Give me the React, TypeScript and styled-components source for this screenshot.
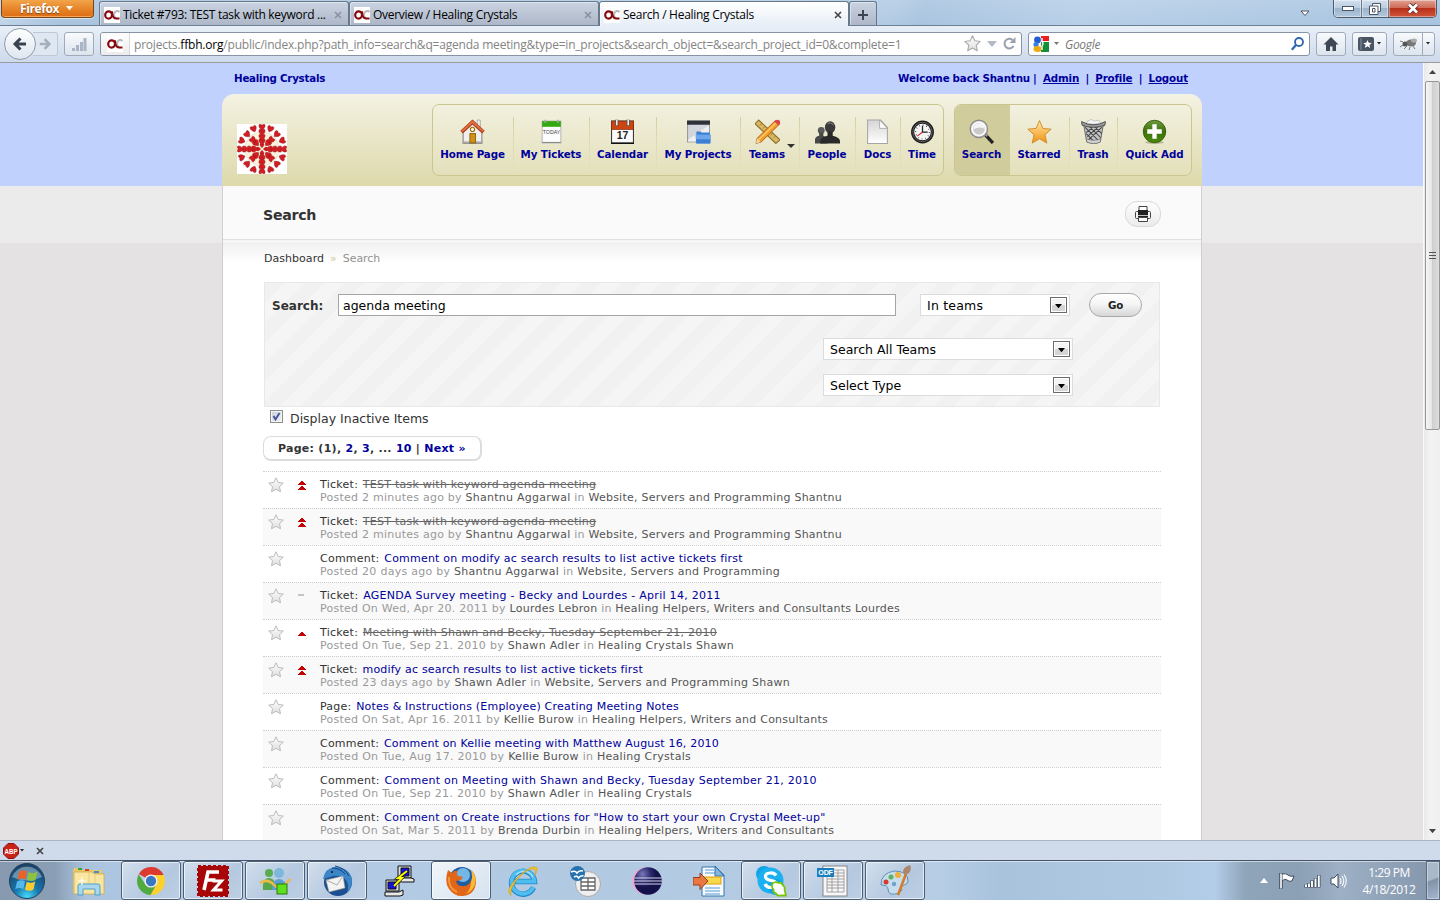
import React from "react";
import styled, { createGlobalStyle, css } from "styled-components";

const Global = createGlobalStyle`
  * { box-sizing: border-box; }
  html, body { margin: 0; padding: 0; }
  body { width: 1440px; height: 900px; overflow: hidden; font-family: "DejaVu Sans", sans-serif; color: #333; }
  svg { display: block; flex: none; }
`;

const Desktop = styled.div`
  width: 1440px;
  height: 900px;
  display: flex;
  flex-direction: column;
  overflow: hidden;
  background: #cfdaeb;
`;

const uiFont = css`
  font-family: "Open Sans", "Noto Sans", sans-serif;
  font-size: 12px;
  letter-spacing: -0.28px;
  color: #000;
`;

/* ---------- browser window ---------- */

const TitleBar = styled.div`
  ${uiFont};
  height: 26px;
  flex: none;
  display: flex;
  align-items: flex-start;
  padding-left: 1px;
  border-bottom: 1px solid #6d7f93;
  background: linear-gradient(180deg, rgba(255, 255, 255, 0.12), rgba(255, 255, 255, 0)),
    linear-gradient(115deg, #c3d7ea 0, #a9c4de 5%, #b5cde5 45%, #b2cbe4 62%, #a9c4e0 64%, #b7cfe8 75%, #a7c3df 100%);
`;

const FirefoxButton = styled.div`
  width: 93px;
  height: 18px;
  border: 1px solid #7d4417;
  border-top: 0;
  border-radius: 0 0 4px 4px;
  background: linear-gradient(#f2a54a, #e8862a 50%, #dd6c14);
  box-shadow: inset 0 -1px 0 #f3a85b, 0 1px 0 rgba(255, 255, 255, 0.5);
  color: #fff;
  font-weight: bold;
  letter-spacing: -0.4px;
  line-height: 16px;
  text-shadow: 0 1px 1px #7d4417;
  display: flex;
  align-items: center;
  gap: 7px;
  padding-left: 18px;
`;

const Tabs = styled.div`
  display: flex;
  margin: 1px 0 0 5px;
  height: 25px;
`;

const Tab = styled.div<{ $active?: boolean; $w: number }>`
  width: ${(p) => p.$w}px;
  height: ${(p) => (p.$active ? 25 : 24)}px;
  display: flex;
  align-items: center;
  border: 1px solid #66788c;
  border-bottom: 0;
  border-radius: 3px 3px 0 0;
  background: ${(p) => (p.$active ? "linear-gradient(#ffffff, #e7eef7)" : "linear-gradient(#c9d3e1, #adb7c8)")};
  box-shadow: inset 1px 1px 0 rgba(255, 255, 255, 0.45);
  padding: 2px 6px 0 4px;
`;

const TabLabel = styled.span`
  flex: 1;
  margin-left: 3px;
  white-space: nowrap;
  line-height: 18px;
`;

const WindowButtons = styled.div`
  display: flex;
  width: 104px;
  height: 18px;
  margin-right: 3px;
  border: 1px solid #4c5a6b;
  border-top: 0;
  border-radius: 0 0 5px 5px;
  overflow: hidden;
`;

const WindowButton = styled.div<{ $w: number; $close?: boolean }>`
  width: ${(p) => p.$w}px;
  display: flex;
  align-items: center;
  justify-content: center;
  border-right: ${(p) => (p.$close ? 0 : 1)}px solid #6b7b8e;
  box-shadow: inset 0 0 0 1px rgba(255, 255, 255, 0.4);
  background: ${(p) =>
    p.$close
      ? "linear-gradient(#e0a493, #cf6a55 45%, #b8301a 50%, #d1553a)"
      : "linear-gradient(#d3e0ee, #bccee1 45%, #9db4cd 50%, #b3c8de)"};
`;

const Spacer = styled.div`
  flex: 1;
`;

const TabListArrow = styled.div`
  margin: 10px 23px 0 0;
`;

const Toolbar = styled.div`
  ${uiFont};
  height: 37px;
  flex: none;
  display: flex;
  align-items: center;
  padding: 1px 5px 2px 4px;
  background: linear-gradient(#e8eff8, #cedaeb);
  border-bottom: 1px solid #9a9b9c;
`;

const BackButton = styled.div`
  width: 32px;
  height: 32px;
  border-radius: 50%;
  border: 1px solid #8f9bab;
  background: linear-gradient(#fdfeff, #dfe6ef);
  display: flex;
  align-items: center;
  justify-content: center;
  margin-right: -3px;
  z-index: 1;
`;

const ForwardButton = styled.div`
  width: 25px;
  height: 24px;
  border: 1px solid #bcc8d8;
  border-left: 0;
  border-radius: 0 3px 3px 0;
  display: flex;
  align-items: center;
  padding-left: 5px;
  background: #dfe7f2;
`;

const ToolButton = styled.div<{ $w: number; $ml: number }>`
  width: ${(p) => p.$w}px;
  height: 24px;
  margin-left: ${(p) => p.$ml}px;
  border: 1px solid #9faaba;
  border-radius: 3px;
  background: linear-gradient(#f8fafc, #dce4ee);
  display: flex;
  align-items: center;
  justify-content: center;
  gap: 3px;
`;

const Field = styled.div<{ $w: number; $ml: number }>`
  width: ${(p) => p.$w}px;
  height: 24px;
  margin-left: ${(p) => p.$ml}px;
  border: 1px solid #8894a5;
  border-radius: 3px;
  background: #fff;
  display: flex;
  align-items: center;
  overflow: hidden;
`;

const Identity = styled.div`
  width: 29px;
  height: 22px;
  display: flex;
  align-items: center;
  justify-content: center;
  border-right: 1px solid #d5d8dc;
  background: linear-gradient(#fdfdfd, #ececec);
`;

const Url = styled.span`
  margin-left: 4px;
  padding-top: 1px;
  letter-spacing: -0.2px;
  white-space: nowrap;
  color: #848484;
  b {
    font-weight: normal;
    color: #000;
  }
`;

const FieldIcons = styled.div`
  display: flex;
  align-items: center;
  gap: 6px;
  margin-left: auto;
  padding-right: 5px;
`;

const SearchHint = styled.span`
  margin-left: 6px;
  padding-top: 1px;
  flex: 1;
  font-style: italic;
  color: #777;
`;

const EngineArrow = styled.div`
  margin-left: 4px;
`;

const SplitLine = styled.div`
  width: 1px;
  height: 22px;
  background: #9faaba;
`;

/* ---------- page ---------- */

const Viewport = styled.div`
  height: 777px;
  flex: none;
  display: flex;
  overflow: hidden;
`;

const Page = styled.div`
  width: 1423px;
  display: flex;
  justify-content: center;
  background: linear-gradient(#c0d1fe 0, #c0d1fe 123px, #ebebeb 123px, #ebebeb 180px, #e5e2e3 180px);
`;

const Site = styled.div`
  width: 980px;
  margin-left: 1px;
`;

const AccountBar = styled.div`
  height: 31px;
  display: flex;
  justify-content: space-between;
  padding: 8px 14px 0 12px;
  font-size: 10.3px;
  line-height: 15px;
  font-weight: bold;
  color: #00009c;
  letter-spacing: -0.24px;
`;

const AccountLinks = styled.div`
  white-space: pre;
  letter-spacing: -0.14px;
  word-spacing: -0.35px;
  u {
    text-underline-offset: 1px;
  }
`;

const Header = styled.div`
  height: 92px;
  border-radius: 12px 12px 0 0;
  background: linear-gradient(#f4f2e3, #ddd9ab);
  display: flex;
  padding: 10px 10px 0 15px;
`;

const Crest = styled.div`
  width: 50px;
  height: 50px;
  margin-top: 20px;
  background: #fff;
`;

const NavGroup = styled.div<{ $ml: number }>`
  display: flex;
  height: 72px;
  margin-left: ${(p) => p.$ml}px;
  border: 1px solid #cbc690;
  border-radius: 7px;
  background: linear-gradient(rgba(255, 255, 255, 0.08), rgba(255, 255, 255, 0.12));
`;

const NavItem = styled.div<{ $w: number; $selected?: boolean; $plain?: boolean; $menu?: boolean }>`
  width: ${(p) => p.$w}px;
  display: flex;
  flex-direction: column;
  align-items: center;
  padding: 14px ${(p) => (p.$menu ? 7 : p.$plain ? 0 : 2)}px 0 0;
  font-size: 10.3px;
  font-weight: bold;
  letter-spacing: -0.1px;
  line-height: 14px;
  white-space: nowrap;
  color: #00009c;
  position: relative;
  border-radius: ${(p) => (p.$selected ? "6px 0 0 6px" : "0")};
  background: ${(p) =>
    p.$selected
      ? "#d1cc9b"
      : p.$plain
        ? "none"
        : "linear-gradient(#d4cfa2, rgba(212, 207, 162, 0.1)) no-repeat right 12px / 1px 52px"};
  svg {
    margin-bottom: 3px;
  }
`;

const MenuArrow = styled.span`
  position: absolute;
  right: 5px;
  top: 39px;
  border: 4px solid transparent;
  border-top-color: #333;
  border-bottom: 0;
`;

const TitleStrip = styled.div`
  height: 56px;
  border: solid #d0d0d0;
  border-width: 0 1px;
  background: linear-gradient(#fafafa 53px, #dfdfdf 53px, #dfdfdf 54px, #f2f2f2 54px, #fdfdfd);
  display: flex;
  justify-content: space-between;
  padding: 15px 40px 0 40px;
`;

const PageTitle = styled.h1`
  margin: 0;
  font-size: 14.2px;
  line-height: 28px;
  letter-spacing: -0.3px;
  color: #333;
`;

const PrintButton = styled.div`
  width: 36px;
  height: 26px;
  border: 1px solid #d9d9d9;
  border-radius: 12px;
  background: linear-gradient(#fefefe, #ebebeb);
  display: flex;
  align-items: center;
  justify-content: center;
`;

const Content = styled.div`
  height: 598px;
  border: solid #d0d0d0;
  border-width: 0 1px;
  background: linear-gradient(#f1f1f1 1px, #ffffff 21px);
  padding: 9px 40px 0;
`;

const Breadcrumb = styled.div`
  padding-left: 1px;
  font-size: 11px;
  line-height: 16px;
  display: flex;
  gap: 6px;
  color: #929292;
  letter-spacing: -0.05px;
  span:first-child {
    color: #333;
    letter-spacing: 0.04px;
  }
`;

const Chevron = styled.span`
  color: #c9b98a;
  opacity: 0.8;
`;

const SearchPanel = styled.div`
  width: 896px;
  height: 125px;
  margin: 15px 0 0 1px;
  border: 1px solid #e8e8e8;
  background: repeating-linear-gradient(135deg, #f1f1f1 0 14px, #f5f5f5 14px 28px);
  font-size: 12.5px;
`;

const SearchRow = styled.div`
  display: flex;
  align-items: center;
  height: 24px;
  margin-top: 10px;
`;

const FieldLabel = styled.label`
  width: 66px;
  font-weight: bold;
  font-size: 12px;
  margin-left: 7px;
  padding-top: 1px;
`;

const TextInput = styled.div`
  width: 558px;
  height: 22px;
  border: 1px solid #a5a5a5;
  background: #fff;
  color: #000;
  line-height: 22px;
  padding-left: 4px;
`;

const Select = styled.div<{ $w: number; $ls?: number }>`
  width: ${(p) => p.$w}px;
  height: 22px;
  border: 1px solid #dcdcdc;
  background: #fff;
  color: #000;
  letter-spacing: ${(p) => p.$ls ?? 0}px;
  display: flex;
  align-items: center;
  justify-content: space-between;
  padding: 0 2px 0 6px;
`;

const DropButton = styled.div`
  width: 17px;
  height: 16px;
  border: 1px solid #6b6b6b;
  background: linear-gradient(#f4f4f4 0 50%, #d5d5d5 50%);
  box-shadow: inset 0 0 0 1px #fff;
  display: flex;
  align-items: center;
  justify-content: center;
  padding-top: 3px;
`;

const SelectSlot = styled.div<{ $ml: number; $mt?: number }>`
  display: flex;
  margin-left: ${(p) => p.$ml}px;
  margin-top: ${(p) => p.$mt ?? 0}px;
`;

const GoButton = styled.div`
  width: 53px;
  height: 24px;
  margin-left: 19px;
  border: 1px solid #a9a9a9;
  border-radius: 12px;
  background: linear-gradient(#ffffff, #f5f5f5 45%, #d7d7d7);
  font-size: 10.3px;
  letter-spacing: -0.2px;
  font-weight: bold;
  color: #222;
  line-height: 23px;
  text-align: center;
`;

const InactiveRow = styled.div`
  height: 24px;
  padding: 0 0 2px 7px;
  display: flex;
  align-items: center;
  gap: 7px;
  font-size: 12.5px;
`;

const Checkbox = styled.div`
  width: 13px;
  height: 13px;
  margin-top: -3px;
  border: 1px solid #8e8f8f;
  box-shadow: inset 0 0 0 1px #f4f4f4;
  background: linear-gradient(135deg, #c8ced6, #f3f5f7);
`;

const Pager = styled.div`
  width: 219px;
  height: 25px;
  margin: 5px 0 10px;
  border: 1px solid #dcdcdc;
  border-right-width: 2px;
  border-bottom-width: 2px;
  border-radius: 8px;
  padding-left: 14px;
  font-size: 11px;
  font-weight: bold;
  letter-spacing: 0.27px;
  line-height: 23px;
  white-space: nowrap;
  background: #fff;
  a {
    color: #00009c;
  }
`;

const Results = styled.div`
  width: 898px;
`;

const ResultRow = styled.div<{ $alt: boolean }>`
  height: 37px;
  border-top: 1px dotted #cfcfcf;
  background: ${(p) => (p.$alt ? "#f9f9f9" : "#fff")};
  display: flex;
  padding: 5px 0 0 5px;
`;

const Priority = styled.div`
  width: 36px;
  padding: 3px 0 0 13px;
`;

const ResultText = styled.div`
  font-size: 11px;
  line-height: 13px;
  padding-top: 1px;
  white-space: nowrap;
`;

const ResultTitle = styled.div<{ $ls: number; $done?: boolean }>`
  letter-spacing: ${(p) => p.$ls}px;
  a {
    margin-left: 1px;
    letter-spacing: ${(p) => p.$ls - 0.02}px;
    color: ${(p) => (p.$done ? "#666" : "#00009c")};
    text-decoration: ${(p) => (p.$done ? "line-through" : "none")};
  }
`;

const ResultMeta = styled.div<{ $ls: number }>`
  letter-spacing: ${(p) => p.$ls}px;
  color: #999;
  b {
    font-weight: normal;
    color: #555;
  }
`;

const ScrollTrack = styled.div`
  width: 17px;
  border-left: 1px solid #fafafa;
  background: linear-gradient(90deg, #e9e9e9, #f3f3f3 40%, #f0f0f0);
  display: flex;
  flex-direction: column;
  align-items: center;
`;

const ScrollArrow = styled.div`
  height: 18px;
  display: flex;
  align-items: center;
`;

const ScrollThumb = styled.div`
  width: 15px;
  height: 349px;
  border: 1px solid #979797;
  border-radius: 2px;
  background: linear-gradient(90deg, #f6f6f6, #e6e6e6 45%, #cfcfcf 50%, #dedede);
  display: flex;
  align-items: center;
  justify-content: center;
`;

const AddonBar = styled.div`
  height: 20px;
  flex: none;
  border-top: 1px solid #a9b4c4;
  background: #cfdaeb;
  display: flex;
  align-items: center;
  padding-left: 3px;
  gap: 1px;
`;

const AddonClose = styled.div`
  margin-left: 11px;
`;

/* ---------- taskbar ---------- */

const Taskbar = styled.div`
  ${uiFont};
  height: 40px;
  flex: none;
  border-top: 1px solid #43546a;
  box-shadow: inset 0 1px 0 rgba(255, 255, 255, 0.55);
  display: flex;
  align-items: stretch;
  background: linear-gradient(
    90deg,
    #8699af 0,
    #8a9fb5 55px,
    #aac3de 85px,
    #b3cbe5 200px,
    #b2c9e2 600px,
    #b7cde6 940px,
    #a9c3dc 1000px,
    #b0c9e2 1150px,
    #b3cce8 1215px,
    #8fa5ba 1245px,
    #8b9fb5 1300px,
    #9db0c5 1340px,
    #8598ae 1426px
  );
`;

const StartSlot = styled.div`
  width: 58px;
  display: flex;
  align-items: center;
  padding-left: 8px;
`;

const TaskSlot = styled.div<{ $open?: boolean; $active?: boolean }>`
  width: 60px;
  margin: 0 1px;
  height: 39px;
  border-radius: 3px;
  display: flex;
  align-items: center;
  justify-content: center;
  ${(p) =>
    p.$open &&
    css`
      border: 1px solid #4d5d72;
      box-shadow: inset 0 0 0 1px rgba(255, 255, 255, 0.65);
      background: ${p.$active
        ? "linear-gradient(135deg, #f0f5fa, #d5e2ef)"
        : "linear-gradient(135deg, #d2dfed, #b4c8df 60%, #bccfe4)"};
    `}
`;

const Tray = styled.div`
  display: flex;
  align-items: center;
  gap: 9px;
  margin-left: auto;
`;

const Clock = styled.div`
  width: 54px;
  margin: 0 10px 0 6px;
  color: #fff;
  line-height: 17px;
  text-align: center;
  letter-spacing: -0.45px;
`;

const ShowDesktop = styled.div`
  width: 14px;
  border: 1px solid #5c6c80;
  box-shadow: inset 0 0 0 1px rgba(255, 255, 255, 0.35);
  background: linear-gradient(160deg, #a9b9ca 45%, #7f92a8 50%, #a5b8cf);
`;

/* ---------- small drawings ---------- */

const OcIcon = () => (
  <svg width="16" height="16" viewBox="0 0 16 16" fill="none">
    <rect width="16" height="16" fill="#fff" />
    <path d="M15.500 5A3.200 3.800 0 1 0 13 11.500" stroke="#b9b9b9" strokeWidth="2" />
    <ellipse cx="4.600" cy="8" rx="3.400" ry="3.700" stroke="#86090d" strokeWidth="2.200" />
    <path d="M8 4.300q.2 7.200 4 7.200h3.500" stroke="#86090d" strokeWidth="2" />
  </svg>
);

const Cross = ({ c = "#444", s = 8 }: { c?: string; s?: number }) => (
  <svg width={s} height={s} viewBox="0 0 8 8">
    <path d="M1 1l6 6M7 1l-6 6" stroke={c} strokeWidth="1.6" />
  </svg>
);

const Down = ({ w = 5, c = "#222" }: { w?: number; c?: string }) => (
  <svg width={w} height={w * 0.6} viewBox="0 0 10 6">
    <path d="M0 0h10L5 6z" fill={c} />
  </svg>
);

const Arrow = ({ c, flip, s = 16 }: { c: string; flip?: boolean; s?: number }) => (
  <svg width={s} height={s} viewBox="0 0 16 16" fill="none">
    <path d={flip ? "M2 8h10M7.5 2.5L13 8l-5.5 5.5" : "M14 8H4M8.500 2.500L3 8l5.500 5.500"} stroke={c} strokeWidth="3" />
  </svg>
);

const Star = ({ s = 16, stroke = "#bcbcbc" }: { s?: number; stroke?: string }) => (
  <svg width={s} height={s} viewBox="0 0 16 16">
    <defs>
      <linearGradient id="silver" x2="0" y2="1">
        <stop stopColor="#fff" />
        <stop offset="1" stopColor="#dedede" />
      </linearGradient>
    </defs>
    <path
      d="M8 .8l2.200 4.700 5.100.6-3.800 3.500 1 5.200L8 12.300l-4.500 2.500 1-5.200L.7 6.100l5.100-.6z"
      fill="url(#silver)"
      stroke={stroke}
      strokeLinejoin="round"
    />
  </svg>
);

const PriorityMark = ({ level }: { level?: string }) => {
  if (level === "highest")
    return (
      <svg width="10" height="12" viewBox="0 0 10 12" shapeRendering="crispEdges">
        <path d="M4 1h2v1h1v1h1v1h1v1H1V4h1V3h1V2h1zM4 6h2v1h1v1h1v1h1v1H1V9h1V8h1V7h1z" fill="#c40000" />
      </svg>
    );
  if (level === "high")
    return (
      <svg width="10" height="12" viewBox="0 0 10 12" shapeRendering="crispEdges">
        <path d="M4 4h2v1h1v1h1v1h1v1H1V7h1V6h1V5h1z" fill="#c40000" />
      </svg>
    );
  if (level === "normal")
    return (
      <svg width="10" height="12" viewBox="0 0 10 12">
        <path d="M1 3h6v2H1z" fill="#c4c4c4" />
      </svg>
    );
  return null;
};

const heart = "M0 3C-4.500-.5-2.500-4 0-1.500 2.500-4 4.500-.5 0 3z";
const CrestArt = () => (
  <svg width="50" height="50" viewBox="-25 -25 50 50">
    <circle r="17" fill="#fbf3dc" stroke="#dccfb0" strokeWidth=".5" />
    {Array.from({ length: 16 }, (_, i) => {
      const radii = i % 4 === 0 ? [3.5, 7.5, 12, 17, 22] : i % 2 === 0 ? [8.5, 13, 21] : [22];
      return radii.map((r) => (
        <path
          key={`${i}-${r}`}
          d={heart}
          transform={`rotate(${i * 22.5}) translate(0 ${-r}) scale(${r < 5 ? 0.75 : 1.15})`}
          fill="#d41d22"
          stroke="#8c1114"
          strokeWidth=".4"
        />
      ));
    })}
  </svg>
);

const NavIcon = ({ name }: { name: string }) => {
  const art: Record<string, React.ReactNode> = {
    home: (
      <>
        <path d="M16.500 1h3v7h-3z" fill="#eee" stroke="#999" strokeWidth=".7" />
        <path d="M3 11l9-8 9 8v12.500H3z" fill="#f2f0ef" stroke="#666" strokeWidth=".8" />
        <path d="M2 21.500h20v2H2z" fill="#a9a9a9" />
        <path d="M1.500 12.500L12 3l10.500 9.500" fill="none" stroke="#9c3b1c" strokeWidth="3.600" />
        <path d="M1.700 12L12 2.700 22.300 12" fill="none" stroke="#e2693a" strokeWidth="2.200" />
        <rect x="9.500" y="14" width="5.500" height="9" fill="#d1930f" stroke="#82580a" strokeWidth=".8" />
        <circle cx="12" cy="10" r="2" fill="#fff3c9" stroke="#9a6b12" />
      </>
    ),
    tickets: (
      <>
        <rect x="3" y="2" width="18" height="21" fill="#fcfcfc" stroke="#aaa" strokeWidth=".8" />
        <rect x="3" y="2" width="18" height="5.500" fill="#35a912" />
        <path d="M6 3.500V.8M18 3.500V.8" stroke="#aaa" strokeWidth="1.600" />
        <text x="12" y="14" fontSize="5" fontFamily="Liberation Sans" fontWeight="normal" textAnchor="middle" fill="#444" letterSpacing="0">
          TODAY
        </text>
        <path d="M3 22.500h18" stroke="#888" />
      </>
    ),
    calendar: (
      <>
        <rect x="1.500" y="2" width="21" height="21" fill="#fbfbfb" stroke="#333" />
        <rect x="1.500" y="2" width="21" height="8" fill="#cb4512" stroke="#8b2c09" strokeWidth=".7" />
        <path d="M6.500 6.500V.8M17.500 6.500V.8" stroke="#555" strokeWidth="3" />
        <path d="M6.500 6V1M17.500 6V1" stroke="#eee" strokeWidth="1.500" />
        <text x="12" y="19.500" fontSize="10" fontFamily="Liberation Sans" fontWeight="bold" textAnchor="middle" fill="#222" letterSpacing="0">
          17
        </text>
        <path d="M1 23.500h22" stroke="#111" strokeWidth="1.500" />
      </>
    ),
    projects: (
      <>
        <rect x="1.500" y="2" width="21" height="20" fill="#d3d5dc" stroke="#999" />
        <path d="M2 20L22 6v15.500H2z" fill="#eeeff2" />
        <rect x="1" y="1.500" width="22" height="4" fill="#2d3038" />
        <path d="M10 12h4l1 1h8v10H9.500z" fill="#3f82d2" />
        <path d="M9 15h15l-.5 8.500H10z" fill="#6ea6ea" />
        <path d="M9.500 19.500h14l-.3 4H10z" fill="#3c7fd4" />
      </>
    ),
    teams: (
      <>
        <path d="M3.500 1L0 4.500 20 23.500l4-3.500z" fill="#d9b765" stroke="#8c6d25" />
        <path d="M5 6l1.500-1.500M8 9l2-2M11 12l1.500-1.500M15 15.500l2-2M18 18l1.500-1.500" stroke="#8c6d25" strokeWidth=".8" />
        <path d="M19.500 1.500l4 3.500L6 22l-5 1.500 1-5z" fill="#f59b26" stroke="#a75b0f" strokeWidth=".8" />
        <path d="M3.500 20L20.500 3.500" stroke="#fbcf7b" strokeWidth="1.300" />
        <path d="M18.500 2.500Q21-.5 23.500 1.500T22.500 6z" fill="#d9434c" />
        <path d="M2 18.500L5.500 22 1 23.500z" fill="#f0d6a8" />
      </>
    ),
    people: (
      <>
        <circle cx="6" cy="11" r="3.300" fill="#5a5a5a" />
        <path d="M0 23.500v-4q0-2.500 4-3.500v-3h4v3q4 1 4 7.500z" fill="#484848" />
        <ellipse cx="14.500" cy="8" rx="5" ry="5.800" fill="#3a3a3a" />
        <path d="M5 23.500v-2.500q0-3 7-5v-4h5v4q7 2 7 5v2.500z" fill="#2a2a2a" />
        <path d="M12 5q3-3 6 1" stroke="#777" strokeWidth="1" fill="none" />
      </>
    ),
    docs: (
      <>
        <path d="M2.500 1h12.500l6.500 7v15.500h-19z" fill="url(#paper)" stroke="#a5a5a5" />
        <path d="M14 1v8h7.500z" fill="#fdfdfd" stroke="#a5a5a5" strokeWidth=".8" />
      </>
    ),
    time: (
      <>
        <circle cx="12" cy="12.500" r="11" fill="#1c1c1c" />
        <circle cx="12" cy="12.500" r="9.300" fill="none" stroke="#777" strokeWidth=".7" />
        <circle cx="12" cy="12.500" r="8" fill="#f6f6f6" />
        <circle cx="12" cy="12.500" r="6.600" fill="none" stroke="#555" strokeWidth="1.300" strokeDasharray=".8 2.655" />
        <path d="M12 6.500v6h5" stroke="#222" strokeWidth="1.200" fill="none" />
        <path d="M12 12.500l-5 4" stroke="#d22" strokeWidth="1" />
      </>
    ),
    search: (
      <>
        <path d="M15.500 15l7.500 8" stroke="#222" strokeWidth="3.200" />
        <path d="M15 14l2.500 2.500" stroke="#999" strokeWidth="2" />
        <circle cx="9.500" cy="9.500" r="8.300" fill="#e8e8e8" stroke="#8c8c8c" strokeWidth="1.300" />
        <circle cx="9.500" cy="9.500" r="6.300" fill="#cacaca" stroke="#fff" strokeWidth="1.200" />
        <path d="M4 10q1-6 6-6t5 5q-6-2-11 1z" fill="#f5f5f5" />
      </>
    ),
    starred: (
      <path
        d="M12 1.500l3.200 7.500 8 .8-6 5.300 1.800 8-7-4.200-7 4.200 1.800-8-6-5.300 8-.8z"
        fill="url(#gold)"
        stroke="#d08a2a"
        strokeWidth=".9"
      />
    ),
    trash: (
      <>
        <path d="M2.500 5h19l-3 17q-6 3-13 0z" fill="#c4c4c4" stroke="#555" strokeWidth=".8" />
        <path d="M4 8l13 13M8 7l11 11M13 7l7 7M20 8L7 20M16 8L6 17M11 8l-6 5M5 14l7 7" stroke="#444" strokeWidth="1" />
        <path d="M5 5l1-3 4-1.500 3 1.500 4-1 2 4z" fill="#f3f3f3" stroke="#aaa" strokeWidth=".6" />
        <path d="M.5 2.500q11.500 6 23 0l-.5 3.500q-11 4-22 0z" fill="#9a9a9a" stroke="#333" strokeWidth=".7" />
        <path d="M5 19q7 3 14 0l-.6 3q-6 3-12.800 0z" fill="#d5d5d5" stroke="#666" strokeWidth=".6" />
      </>
    ),
    add: (
      <>
        <ellipse cx="12" cy="22.500" rx="9" ry="1.500" fill="#8a865c" opacity=".5" />
        <circle cx="12" cy="12" r="10.800" fill="url(#green)" stroke="#2c5507" strokeWidth=".8" />
        <path d="M12 5v14M5 12h14" stroke="#fff" strokeWidth="4.200" />
      </>
    ),
  };
  return (
    <svg width="25" height="25" viewBox="0 0 24 24">
      <defs>
        <linearGradient id="paper" x2="0" y2="1">
          <stop stopColor="#d5d5d5" />
          <stop offset="1" stopColor="#fff" />
        </linearGradient>
        <linearGradient id="gold" x2="0" y2="1">
          <stop stopColor="#ffeaa5" />
          <stop offset="1" stopColor="#f19112" />
        </linearGradient>
        <linearGradient id="green" x2="0" y2="1">
          <stop stopColor="#6f9b3f" />
          <stop offset=".5" stopColor="#3d7209" />
          <stop offset="1" stopColor="#4d8a0c" />
        </linearGradient>
      </defs>
      {art[name]}
    </svg>
  );
};

const TaskIcon = ({ name }: { name: string }) => {
  const art: Record<string, React.ReactNode> = {
    explorer: (
      <>
        <path d="M0 6l1-3h6l1 2h20l1 1v22H0z" fill="#eac76a" />
        <rect x="5" y="3" width="4" height="2" fill="#35a33a" />
        <rect x="12" y="4" width="4" height="2" fill="#d3471f" />
        <rect x="21" y="6" width="5" height="2" fill="#3a8fd0" />
        <path d="M1 7h18l2 2h10v20H1z" fill="#f8e6a2" stroke="#cfa94c" strokeWidth=".8" />
        <path d="M16 7v14M22 9v12" stroke="#e3c87c" strokeWidth=".8" />
        <path d="M5 30V21q0-2 2-2h18q2 0 2 2v9h-5v-6H10v6z" fill="#a9d8ee" stroke="#4f9fc6" />
        <path d="M9 12v8M5 16h8" stroke="#fff" strokeWidth="1.200" />
      </>
    ),
    chrome: (
      <>
        <path d="M16 16L3.900 9A14 14 0 0 1 28.600 10H16z" fill="#dc3a2f" />
        <path d="M16 16L16 10h12.600A14 14 0 0 1 15 30z" fill="#fcd02d" />
        <path d="M3.700 9.300A14 14 0 0 0 15.500 30l5.800-10.500H10.500z" fill="#51a941" />
        <circle cx="16" cy="16" r="6.600" fill="#f2f2f2" />
        <circle cx="16" cy="16" r="5.200" fill="#3a78c2" />
      </>
    ),
    filezilla: (
      <>
        <rect x="1" y="1" width="30" height="30" fill="#a80606" stroke="#a80606" strokeWidth="2.500" strokeDasharray="3 2" />
        <path d="M7 25L11 7h11M9.500 15h9" stroke="#fff" strokeWidth="3.600" fill="none" />
        <path d="M15.500 16h9l-8 9h9" stroke="#fff" strokeWidth="3" fill="none" />
      </>
    ),
    messenger: (
      <>
        <circle cx="10" cy="8" r="4" fill="#59ad4f" />
        <path d="M4 25q-1-12 6-12t7 12z" fill="#57a84d" />
        <circle cx="20" cy="8" r="5" fill="#7db7dc" />
        <path d="M13 25q0-11 7-11t8 11z" fill="#5a9fd0" />
        <path d="M1 18q8-5 14 2t16-6" stroke="#ecb94b" strokeWidth="2.500" fill="none" />
        <rect x="18" y="19" width="10" height="10" fill="#5fe01e" stroke="#2c7b0b" />
      </>
    ),
    thunderbird: (
      <>
        <circle cx="17" cy="17" r="14" fill="#1c4f91" />
        <path d="M2 14Q4 3 14 2q12 0 16 9 3 9-4 17 3-10-3-15-7-4-14-1z" fill="#3b86c8" />
        <path d="M11 3q8 0 13 6M14 1q10 2 14 10" stroke="#16407a" strokeWidth="1" fill="none" />
        <path d="M5 15l17-4 2 12-16 4z" fill="#f3f3f1" stroke="#999" strokeWidth=".6" />
        <path d="M5 15l11 5 6-9" fill="none" stroke="#999" strokeWidth=".8" />
        <circle cx="11" cy="7" r="1" fill="#111" />
      </>
    ),
    putty: (
      <>
        <path d="M15 1h13v12H15zM3 15h13v11H3z" fill="#ddd" stroke="#111" />
        <path d="M18 3h8v8h-8zM5 17h8v7H5z" fill="#1212dc" stroke="#111" />
        <path d="M14 13h14l3 1v3H14zM2 27h14l4-2v5l-3 1H2z" fill="#e8e8e8" stroke="#111" />
        <path d="M24 6l-9 7 4 0-8 8" fill="none" stroke="#111" strokeWidth="3" />
        <path d="M24 6l-9 7 4 0-8 8" fill="none" stroke="#ff0" strokeWidth="1.900" />
      </>
    ),
    firefox: (
      <>
        <circle cx="17" cy="15" r="13" fill="#235c9f" />
        <circle cx="18" cy="10" r="7" fill="#73b7e6" />
        <path d="M3 5q-4 12 1 19 6 8 14 7 12-1 13-14 0-8-5-12 3 6 0 11-3 6-9 5-5 0-6-5l5-1 2-3-5-1Q11 8 13 6 9 5 7 8z" fill="#e2661a" />
        <path d="M26 5q6 6 4 14-2 7-9 10 5-5 5-12 2-5 0-12z" fill="#f7bb34" />
        <path d="M4 12q-1 11 8 15" stroke="#f3973a" strokeWidth="2" fill="none" />
      </>
    ),
    ie: (
      <>
        <path d="M27.500 22.500A11.500 11.500 0 1 1 28.500 16.500H9" stroke="#1f86cb" strokeWidth="5.400" fill="none" transform="translate(-1 0)" />
        <path d="M26.500 22A11.500 11.500 0 1 1 27.500 16.500H9" stroke="#4fbdf0" strokeWidth="3.800" fill="none" />
        <path d="M9 10q4-4 9-3.500 6 .5 8 6" stroke="#b5e4fa" strokeWidth="1.200" fill="none" />
        <path d="M4 30.500Q-3 26 11 12 25-1 29.500 2.500q2 2-2 8 2-6-1-6.500-5-1-14 8Q2 23 4 30.500z" fill="#f5c426" stroke="#c99313" strokeWidth=".5" />
      </>
    ),
    office: (
      <>
        <circle cx="19" cy="19" r="12.500" fill="#efefef" stroke="#a9a9a9" />
        <path d="M12 13h14v12H12zM12 17h14M12 21h14M19 13v12" stroke="#666" strokeWidth="1.300" fill="#fff" />
        <circle cx="8.500" cy="8.500" r="7.500" fill="#2572ae" />
        <path d="M2 7q4-2 6 1 2-3 6-2M5 12q3-2 4.500 1 2-3 5-2" stroke="#fff" strokeWidth="1.600" fill="none" />
      </>
    ),
    eclipse: (
      <>
        <circle cx="14.500" cy="16" r="13.500" fill="#eea9d2" />
        <circle cx="17" cy="16" r="13.800" fill="url(#night)" />
        <path d="M3.500 13h27M3 16h28M3.500 19h27" stroke="#d7d5ee" strokeWidth="1.200" />
      </>
    ),
    import: (
      <>
        <path d="M9 2h14l8 8v21H9z" fill="#f6fafd" stroke="#2f77ae" />
        <path d="M12 5h9M12 8h10M12 23h15M12 26h15M12 29h15" stroke="#8ebbe2" strokeWidth="1.500" />
        <path d="M22 1v10h9z" fill="#86b5dd" stroke="#2f77ae" />
        <rect x="10" y="12" width="18" height="7" fill="#fbd94d" stroke="#d99e13" />
        <path d="M0 12.500h7V8l8 8-8 8.500V20H0z" fill="#ea7741" stroke="#96401b" />
      </>
    ),
    skype: (
      <>
        <circle cx="9" cy="9" r="8" fill="#12a5e6" />
        <circle cx="15.500" cy="15.500" r="13" fill="#1cb0f0" />
        <circle cx="21" cy="22" r="8" fill="#12a5e6" />
        <path d="M21 10.500q-2-3-6-2.500-5 .5-4.500 4 .5 2.500 5 3.300 5.500.7 5.500 4 0 3.200-5 3.200-4.500 0-6-3.500" stroke="#fff" strokeWidth="3.200" fill="none" />
        <path d="M17.500 18.500q3-2.500 6-.5 3-1 4.500 2.500 2.500 1.500 1.500 4l1.500 6-5.500 0q-3 1-4.500-2-3-.5-2.500-4-2.500-2-1-6z" fill="#fff" stroke="#7cc40a" strokeWidth="1.800" />
      </>
    ),
    odf: (
      <>
        <rect x="6" y="1" width="24" height="30" fill="#f7f7f7" stroke="#888" />
        <path d="M10 5h17v22H10zM10 8h17M10 11h17M10 14h17M10 17h17M10 20h17M10 23h17M15 5v22M21 5v22" stroke="#999" strokeWidth=".9" fill="none" />
        <rect x="0" y="3" width="17" height="9" fill="#177fc0" />
        <text x="8.500" y="10.200" fontSize="7.200" fontFamily="Liberation Sans" fontWeight="bold" fill="#fff" textAnchor="middle">
          ODF
        </text>
      </>
    ),
    paint: (
      <>
        <path d="M2 20Q2 8 15 6q14 0 14 10 0 3-4 4t-2 5q-4 5-11 4Q9 28 9 24t-7-4z" fill="#c5dded" stroke="#5d92b6" />
        <circle cx="7" cy="17" r="2.500" fill="#d73a31" />
        <circle cx="12" cy="12" r="2.500" fill="#5cb25a" />
        <circle cx="19" cy="10" r="3" fill="#efaf35" />
        <circle cx="15" cy="19" r="2.200" fill="#6fa3c4" />
        <path d="M28 6L19 30" stroke="#d97a28" strokeWidth="2.500" />
        <path d="M24 7q0-5 7-7 2 4-1 8l-4 2z" fill="#ac866a" />
      </>
    ),
  };
  return (
    <svg width="32" height="32" viewBox="0 0 32 32">
      <defs>
        <radialGradient id="night" cx=".3" cy=".25">
          <stop stopColor="#7a78b8" />
          <stop offset=".6" stopColor="#2c2a6e" />
          <stop offset="1" stopColor="#14124a" />
        </radialGradient>
      </defs>
      {art[name]}
    </svg>
  );
};

const StartOrb = () => (
  <svg width="38" height="38" viewBox="0 0 38 38">
    <defs>
      <radialGradient id="orb" cx=".5" cy=".95" r=".9">
        <stop stopColor="#46d9fb" />
        <stop offset=".4" stopColor="#1676ad" />
        <stop offset="1" stopColor="#1c4266" />
      </radialGradient>
    </defs>
    <circle cx="19" cy="19" r="17.500" fill="url(#orb)" stroke="#23405c" />
    <path d="M4 15A16 16 0 0 1 34 15Q19 22 4 15z" fill="#b6cddd" opacity=".5" />
    <path d="M11 10q4-3 8-.5L17.500 17.500q-4-2-8 .5z" fill="#e8622a" />
    <path d="M20.500 10q4 2.500 9-.5L27.500 18q-4 2-8.500 0z" fill="#8cc23f" />
    <path d="M9 19.500q4-2.500 8-.2L15.300 27q-4-2-8 .3z" fill="#58b7ea" />
    <path d="M18.700 19.700q4 2.300 8.500-.2L25.500 27.500q-4 2.500-8.500 0z" fill="#fccb2f" />
  </svg>
);

/* ---------- data ---------- */

const mainNav = [
  { icon: "home", label: "Home Page", w: 81 },
  { icon: "tickets", label: "My Tickets", w: 76 },
  { icon: "calendar", label: "Calendar", w: 67 },
  { icon: "projects", label: "My Projects", w: 84 },
  { icon: "teams", label: "Teams", w: 59, menu: true },
  { icon: "people", label: "People", w: 56 },
  { icon: "docs", label: "Docs", w: 45 },
  { icon: "time", label: "Time", w: 42, plain: true },
];

const toolNav = [
  { icon: "search", label: "Search", w: 55, selected: true },
  { icon: "starred", label: "Starred", w: 60 },
  { icon: "trash", label: "Trash", w: 48 },
  { icon: "add", label: "Quick Add", w: 73, plain: true },
];

type Result = {
  kind: string;
  title: string;
  when: string;
  who: string;
  where: string;
  ls: [number, number];
  level?: string;
  done?: boolean;
};

const results: Result[] = [
  { kind: "Ticket", title: "TEST task with keyword agenda meeting", when: "2 minutes ago", who: "Shantnu Aggarwal", where: "Website, Servers and Programming Shantnu", ls: [0.263, 0.243], level: "highest", done: true },
  { kind: "Ticket", title: "TEST task with keyword agenda meeting", when: "2 minutes ago", who: "Shantnu Aggarwal", where: "Website, Servers and Programming Shantnu", ls: [0.263, 0.243], level: "highest", done: true },
  { kind: "Comment", title: "Comment on modify ac search results to list active tickets first", when: "20 days ago", who: "Shantnu Aggarwal", where: "Website, Servers and Programming", ls: [0.235, 0.262] },
  { kind: "Ticket", title: "AGENDA Survey meeting - Becky and Lourdes - April 14, 2011", when: "On Wed, Apr 20. 2011", who: "Lourdes Lebron", where: "Healing Helpers, Writers and Consultants Lourdes", ls: [0.304, 0.231], level: "normal" },
  { kind: "Ticket", title: "Meeting with Shawn and Becky, Tuesday September 21, 2010", when: "On Tue, Sep 21. 2010", who: "Shawn Adler", where: "Healing Crystals Shawn", ls: [0.263, 0.287], level: "high", done: true },
  { kind: "Ticket", title: "modify ac search results to list active tickets first", when: "23 days ago", who: "Shawn Adler", where: "Website, Servers and Programming Shawn", ls: [0.215, 0.285], level: "highest" },
  { kind: "Page", title: "Notes & Instructions (Employee) Creating Meeting Notes", when: "On Sat, Apr 16. 2011", who: "Kellie Burow", where: "Healing Helpers, Writers and Consultants", ls: [0.221, 0.236] },
  { kind: "Comment", title: "Comment on Kellie meeting with Matthew August 16, 2010", when: "On Tue, Aug 17. 2010", who: "Kellie Burow", where: "Healing Crystals", ls: [0.198, 0.275] },
  { kind: "Comment", title: "Comment on Meeting with Shawn and Becky, Tuesday September 21, 2010", when: "On Tue, Sep 21. 2010", who: "Shawn Adler", where: "Healing Crystals", ls: [0.275, 0.285] },
  { kind: "Comment", title: 'Comment on Create instructions for "How to start your own Crystal Meet-up"', when: "On Sat, Mar 5. 2011", who: "Brenda Durbin", where: "Healing Helpers, Writers and Consultants", ls: [0.25, 0.224] },
];

const tasks = [
  { name: "explorer" },
  { name: "chrome", open: true },
  { name: "filezilla", open: true },
  { name: "messenger", open: true },
  { name: "thunderbird", open: true },
  { name: "putty" },
  { name: "firefox", open: true, active: true },
  { name: "ie" },
  { name: "office" },
  { name: "eclipse" },
  { name: "import" },
  { name: "skype", open: true },
  { name: "odf", open: true },
  { name: "paint", open: true },
];

/* ---------- sections ---------- */

const BrowserChrome = () => (
  <>
    <TitleBar>
      <FirefoxButton>
        Firefox <Down w={7} c="#fff" />
      </FirefoxButton>
      <Tabs>
        <Tab $w={250}>
          <OcIcon />
          <TabLabel>Ticket #793: TEST task with keyword ...</TabLabel>
          <Cross c="#8791a0" />
        </Tab>
        <Tab $w={250}>
          <OcIcon />
          <TabLabel>Overview / Healing Crystals</TabLabel>
          <Cross c="#8791a0" />
        </Tab>
        <Tab $w={250} $active>
          <OcIcon />
          <TabLabel>Search / Healing Crystals</TabLabel>
          <Cross />
        </Tab>
        <Tab $w={28}>
          <svg width="18" height="12" viewBox="0 0 18 12">
            <path d="M9 1v10M4 6h10" stroke="#3c4652" strokeWidth="2" />
          </svg>
        </Tab>
      </Tabs>
      <Spacer />
      <TabListArrow>
        <svg width="10" height="7" viewBox="0 0 10 7">
          <path d="M1 1h8L5 5.500z" fill="#fff" stroke="#556" />
        </svg>
      </TabListArrow>
      <WindowButtons>
        <WindowButton $w={28}>
          <svg width="12" height="5" viewBox="0 0 12 5">
            <rect x=".5" y=".5" width="11" height="4" fill="#fff" stroke="#4b5566" />
          </svg>
        </WindowButton>
        <WindowButton $w={27}>
          <svg width="13" height="12" viewBox="0 0 13 12">
            <path d="M3.500.5h8v8H9v3H.500V3h3z" fill="#fff" stroke="#4b5566" />
            <path d="M3.500 3H9v5.500M3.500 5.500H6V9H3.500z" fill="none" stroke="#4b5566" />
          </svg>
        </WindowButton>
        <WindowButton $w={47} $close>
          <svg width="14" height="11" viewBox="0 0 14 11">
            <path d="M3 1.500l8 8M11 1.500l-8 8" stroke="#5b2a2a" strokeWidth="4.500" />
            <path d="M3 1.500l8 8M11 1.500l-8 8" stroke="#fff" strokeWidth="2.800" />
          </svg>
        </WindowButton>
      </WindowButtons>
    </TitleBar>
    <Toolbar>
      <BackButton>
        <Arrow c="#39434f" />
      </BackButton>
      <ForwardButton>
        <Arrow c="#a3afbd" flip s={14} />
      </ForwardButton>
      <ToolButton $w={30} $ml={6}>
        <svg width="16" height="16" viewBox="0 0 16 16">
          <path d="M2.500 15v-3M6.500 15V9M10.500 15V6M14 15V2" stroke="#a9b5c5" strokeWidth="3" />
        </svg>
      </ToolButton>
      <Field $w={922} $ml={6}>
        <Identity>
          <OcIcon />
        </Identity>
        <Url>
          projects.<b>ffbh.org</b>
          /public/index.php?path_info=search&amp;q=agenda meeting&amp;type=in_projects&amp;search_object=&amp;search_project_id=0&amp;complete=1
        </Url>
        <FieldIcons>
          <Star s={17} stroke="#a9a9a9" />
          <Down w={10} c="#b1bac5" />
          <svg width="13" height="13" viewBox="0 0 13 13">
            <path d="M10.500 9A4.800 4.800 0 1 1 9.500 3" fill="none" stroke="#98a2ae" strokeWidth="2" />
            <path d="M12.500 0v6h-6z" fill="#98a2ae" />
          </svg>
        </FieldIcons>
      </Field>
      <Field $w={282} $ml={6}>
        <svg width="21" height="18" viewBox="-4 -1 21 18">
          <path d="M8 0h8v5H8z" fill="#e9201b" />
          <path d="M8 6h8v10H8z" fill="#129139" />
          <circle cx="4.500" cy="4" r="3.400" fill="#1f5fd2" />
          <circle cx="3" cy="8.500" r="2.600" fill="#3c7fe0" />
          <ellipse cx="4.500" cy="13" rx="4" ry="3" fill="#f0ab12" />
          <path d="M9 2v3q2 3 0 5v4" stroke="#fff" strokeWidth="1.400" fill="none" />
        </svg>
        <EngineArrow>
          <Down w={5} c="#777" />
        </EngineArrow>
        <SearchHint>Google</SearchHint>
        <FieldIcons>
          <svg width="13" height="14" viewBox="0 0 13 14">
            <circle cx="8" cy="5" r="4" fill="none" stroke="#2f66ad" strokeWidth="1.800" />
            <path d="M5 8L.8 12.800" stroke="#2f66ad" strokeWidth="2.300" />
          </svg>
        </FieldIcons>
      </Field>
      <ToolButton $w={30} $ml={6}>
        <svg width="16" height="14" viewBox="0 0 16 14">
          <path d="M8 0L.5 7.500H3V14h4V9.500h2.500V14H13V7.500h2.500z" fill="#3e4854" />
        </svg>
      </ToolButton>
      <ToolButton $w={35} $ml={6}>
        <svg width="16" height="14" viewBox="0 0 16 14">
          <rect width="16" height="14" rx="2" fill="#4a5563" />
          <path d="M3 1v12" stroke="#8793a1" />
          <path d="M9.500 3l1.200 2.800 3.100.2-2.400 2 .8 3-2.700-1.700L6.800 11l.8-3-2.400-2 3.100-.2z" fill="#fff" />
        </svg>
        <Down w={4} />
      </ToolButton>
      <ToolButton $w={42} $ml={6}>
        <svg width="20" height="14" viewBox="0 0 20 14">
          <ellipse cx="12" cy="6" rx="5" ry="3.600" fill="#777" />
          <ellipse cx="15" cy="3.500" rx="3" ry="2" fill="#aaa" />
          <circle cx="6" cy="7" r="2.500" fill="#555" />
          <path d="M8 9l-3 3M11 10l-1 3M14 9l2 3M4 5L1 4M4 8l-3 2" stroke="#777" />
        </svg>
        <SplitLine />
        <Down w={4} />
      </ToolButton>
    </Toolbar>
  </>
);

const SelectBox = ({ w, label, ls }: { w: number; label: string; ls?: number }) => (
  <Select $w={w} $ls={ls}>
    {label}
    <DropButton>
      <Down w={7} c="#000" />
    </DropButton>
  </Select>
);

const ResultList = () => (
  <Results>
    {results.map((r, i) => (
      <ResultRow key={i} $alt={i % 2 === 1}>
        <Star />
        <Priority>
          <PriorityMark level={r.level} />
        </Priority>
        <ResultText>
          <ResultTitle $ls={r.ls[0]} $done={r.done}>
            {r.kind}: <a>{r.title}</a>
          </ResultTitle>
          <ResultMeta $ls={r.ls[1]}>
            Posted {r.when} by <b>{r.who}</b> in <b>{r.where}</b>
          </ResultMeta>
        </ResultText>
      </ResultRow>
    ))}
  </Results>
);

export default function App() {
  return (
    <Desktop>
      <Global />
      <BrowserChrome />
      <Viewport>
        <Page>
          <Site>
            <AccountBar>
              <span>Healing Crystals</span>
              <AccountLinks>
                Welcome back Shantnu |{"  "}<u>Admin</u>{"  "}|{"  "}<u>Profile</u>{"  "}|{"  "}<u>Logout</u>
              </AccountLinks>
            </AccountBar>
            <Header>
              <Crest>
                <CrestArt />
              </Crest>
              <NavGroup $ml={145}>
                {mainNav.map((n) => (
                  <NavItem key={n.label} $w={n.w} $plain={n.plain} $menu={n.menu}>
                    <NavIcon name={n.icon} />
                    {n.label}
                    {n.menu && <MenuArrow />}
                  </NavItem>
                ))}
              </NavGroup>
              <NavGroup $ml={10}>
                {toolNav.map((n) => (
                  <NavItem key={n.label} $w={n.w} $plain={n.plain} $selected={n.selected}>
                    <NavIcon name={n.icon} />
                    {n.label}
                  </NavItem>
                ))}
              </NavGroup>
            </Header>
            <TitleStrip>
              <PageTitle>Search</PageTitle>
              <PrintButton>
                <svg width="16" height="16" viewBox="0 0 16 16">
                  <path d="M4 .5h8V5H4z" fill="#fff" stroke="#444" />
                  <rect x=".5" y="5.500" width="15" height="7" rx="1" fill="#f4f4f4" stroke="#444" />
                  <path d="M3 4h10v5H3z" fill="#222" />
                  <path d="M3 10.500h10" stroke="#222" strokeWidth="1.500" />
                  <path d="M3.500 11.500h9v4h-9z" fill="#fff" stroke="#444" />
                </svg>
              </PrintButton>
            </TitleStrip>
            <Content>
              <Breadcrumb>
                <span>Dashboard</span>
                <Chevron>»</Chevron>
                <span>Search</span>
              </Breadcrumb>
              <SearchPanel>
                <SearchRow>
                  <FieldLabel>Search:</FieldLabel>
                  <TextInput>agenda meeting</TextInput>
                  <SelectSlot $ml={24}>
                    <SelectBox w={150} label="In teams" ls={0.2} />
                  </SelectSlot>
                  <GoButton>Go</GoButton>
                </SearchRow>
                <SelectSlot $ml={558} $mt={21}>
                  <SelectBox w={250} label="Search All Teams" />
                </SelectSlot>
                <SelectSlot $ml={558} $mt={14}>
                  <SelectBox w={250} label="Select Type" />
                </SelectSlot>
              </SearchPanel>
              <InactiveRow>
                <Checkbox>
                  <svg width="11" height="11" viewBox="0 0 11 11">
                    <path d="M2.500 5l2 3.500L8.500 2" fill="none" stroke="#41549c" strokeWidth="1.900" />
                  </svg>
                </Checkbox>
                Display Inactive Items
              </InactiveRow>
              <Pager>
                Page: (1), <a>2</a>, <a>3</a>, ... <a>10</a> | <a>Next »</a>
              </Pager>
              <ResultList />
            </Content>
          </Site>
        </Page>
        <ScrollTrack>
          <ScrollArrow>
            <svg width="7" height="4" viewBox="0 0 7 4">
              <path d="M0 4l3.500-4L7 4z" fill="#444" />
            </svg>
          </ScrollArrow>
          <ScrollThumb>
            <svg width="7" height="8" viewBox="0 0 7 8">
              <path d="M0 .5h7M0 3.500h7M0 6.500h7" stroke="#555" />
            </svg>
          </ScrollThumb>
          <Spacer />
          <ScrollArrow>
            <Down w={7} c="#444" />
          </ScrollArrow>
        </ScrollTrack>
      </Viewport>
      <AddonBar>
        <svg width="16" height="16" viewBox="0 0 16 16">
          <path d="M5 .5h6L15.500 5v6L11 15.500H5L.5 11V5z" fill="#c92318" stroke="#8e1410" />
          <text x="8" y="10.800" fontSize="7.500" fontFamily="Liberation Sans" fontWeight="bold" fill="#fff" textAnchor="middle" textLength="13" lengthAdjust="spacingAndGlyphs">
            ABP
          </text>
        </svg>
        <Down w={4} />
        <AddonClose>
          <Cross />
        </AddonClose>
      </AddonBar>
      <Taskbar>
        <StartSlot>
          <StartOrb />
        </StartSlot>
        {tasks.map((t) => (
          <TaskSlot key={t.name} $open={t.open} $active={t.active}>
            <TaskIcon name={t.name} />
          </TaskSlot>
        ))}
        <Tray>
          <svg width="8" height="5" viewBox="0 0 8 5">
            <path d="M0 5l4-5 4 5z" fill="#fff" />
          </svg>
          <svg width="18" height="18" viewBox="0 0 18 18">
            <path d="M4 1v16" stroke="#3e4d5e" strokeWidth="3.500" />
            <path d="M5 2q4-1 6 1t6 1l-2 5q-3 1-5-1T5 9z" fill="#fff" stroke="#3e4d5e" />
            <path d="M4 1.500v15" stroke="#fff" strokeWidth="1.600" />
          </svg>
          <svg width="17" height="14" viewBox="0 0 17 14">
            <path d="M2 13.500v-3M5 13.500V9M8 13.500V6.500M11.500 13.500V4M14.800 13.500V1" stroke="#3e4d5e" strokeWidth="3.400" />
            <path d="M2 13v-2.500M5 13V9.500M8 13V7M11.500 13V4.500M14.800 13V1.500" stroke="#fff" strokeWidth="1.900" />
          </svg>
          <svg width="17" height="16" viewBox="0 0 17 16">
            <path d="M1 5h3l4-4v14l-4-4H1z" fill="#fff" stroke="#3e4d5e" />
            <path d="M10 5q2 3 0 6M12 3q3.500 5 0 10M14 1.500q4.500 6.500 0 13" fill="none" stroke="#f4f7fa" strokeWidth="1.200" />
          </svg>
          <Clock>
            1:29 PM
            <br />
            4/18/2012
          </Clock>
        </Tray>
        <ShowDesktop />
      </Taskbar>
    </Desktop>
  );
}
